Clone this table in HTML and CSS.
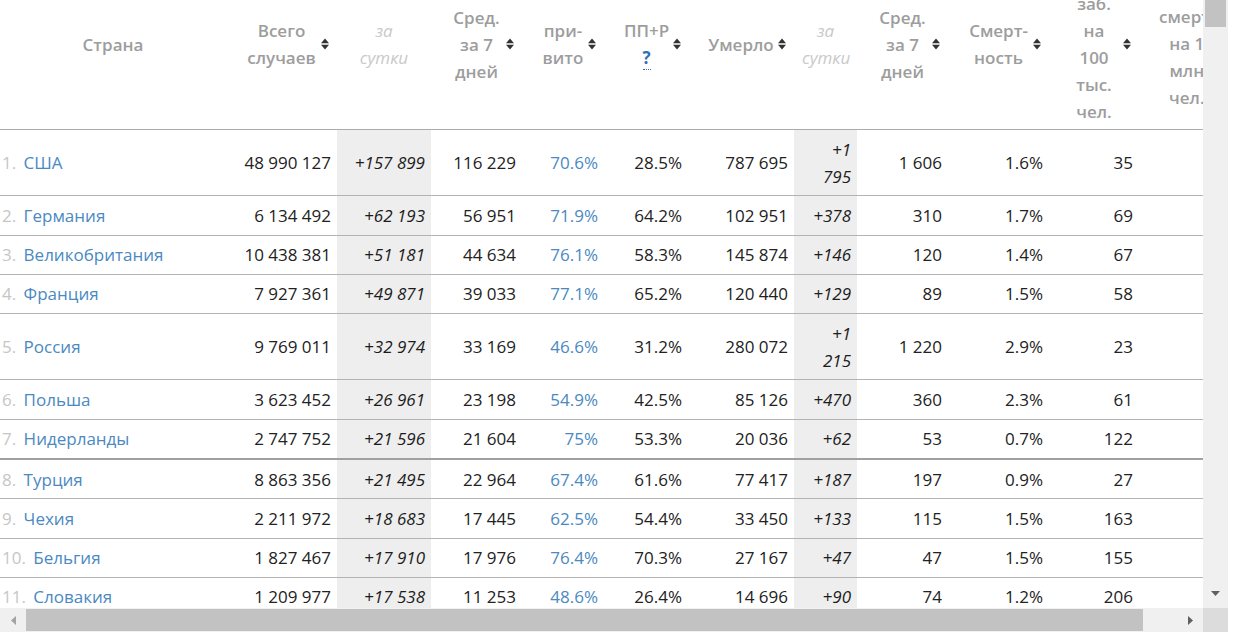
FILE: index.html
```html
<!DOCTYPE html>
<html lang="ru">
<head>
<meta charset="utf-8">
<title>Статистика</title>
<link rel="stylesheet" href="styles.css">
</head>
<body>
<div class="frame">
  <div class="viewport">
    <table class="stats">
      <colgroup>
        <col class="w-country"><col class="w-total"><col class="w-day"><col class="w-avg"><col class="w-vac"><col class="w-ppr"><col class="w-dead"><col class="w-dday"><col class="w-avg"><col class="w-mort"><col class="w-per"><col class="w-last">
      </colgroup>
      <thead>
        <tr>
          <th class="plain">Страна</th>
          <th><div class="h"><span class="lbl">Всего<br>случаев</span><svg class="sort" viewBox="0 0 8 12"><path d="M0 5.2 4 0.6 8 5.2Z M0 6.8 4 11.4 8 6.8Z"/></svg></div></th>
          <th class="plain day">за<br>сутки</th>
          <th><div class="h"><span class="lbl">Сред.<br>за 7<br>дней</span><svg class="sort" viewBox="0 0 8 12"><path d="M0 5.2 4 0.6 8 5.2Z M0 6.8 4 11.4 8 6.8Z"/></svg></div></th>
          <th><div class="h"><span class="lbl">при-<br>вито</span><svg class="sort" viewBox="0 0 8 12"><path d="M0 5.2 4 0.6 8 5.2Z M0 6.8 4 11.4 8 6.8Z"/></svg></div></th>
          <th><div class="h"><span class="lbl">ПП+Р<br><a class="hint">?</a></span><svg class="sort" viewBox="0 0 8 12"><path d="M0 5.2 4 0.6 8 5.2Z M0 6.8 4 11.4 8 6.8Z"/></svg></div></th>
          <th><div class="h"><span class="lbl">Умерло</span><svg class="sort" viewBox="0 0 8 12"><path d="M0 5.2 4 0.6 8 5.2Z M0 6.8 4 11.4 8 6.8Z"/></svg></div></th>
          <th class="plain day">за<br>сутки</th>
          <th><div class="h"><span class="lbl">Сред.<br>за 7<br>дней</span><svg class="sort" viewBox="0 0 8 12"><path d="M0 5.2 4 0.6 8 5.2Z M0 6.8 4 11.4 8 6.8Z"/></svg></div></th>
          <th><div class="h"><span class="lbl">Смерт-<br>ность</span><svg class="sort" viewBox="0 0 8 12"><path d="M0 5.2 4 0.6 8 5.2Z M0 6.8 4 11.4 8 6.8Z"/></svg></div></th>
          <th><div class="h"><span class="lbl tall">заб.<br>на<br>100<br>тыс.<br>чел.</span><svg class="sort" viewBox="0 0 8 12"><path d="M0 5.2 4 0.6 8 5.2Z M0 6.8 4 11.4 8 6.8Z"/></svg></div></th>
          <th><div class="h"><span class="lbl tall">смерт.<br>на 1<br>млн<br>чел.</span><svg class="sort" viewBox="0 0 8 12"><path d="M0 5.2 4 0.6 8 5.2Z M0 6.8 4 11.4 8 6.8Z"/></svg></div></th>
        </tr>
      </thead>
      <tbody>
        <tr><td class="country"><span class="rank">1.</span> <a>США</a></td><td>48 990 127</td><td class="day">+157 899</td><td>116 229</td><td class="pct">70.6%</td><td>28.5%</td><td>787 695</td><td class="day dday">+1 795</td><td>1 606</td><td>1.6%</td><td>35</td><td></td></tr>
        <tr><td class="country"><span class="rank">2.</span> <a>Германия</a></td><td>6 134 492</td><td class="day">+62 193</td><td>56 951</td><td class="pct">71.9%</td><td>64.2%</td><td>102 951</td><td class="day dday">+378</td><td>310</td><td>1.7%</td><td>69</td><td></td></tr>
        <tr><td class="country"><span class="rank">3.</span> <a>Великобритания</a></td><td>10 438 381</td><td class="day">+51 181</td><td>44 634</td><td class="pct">76.1%</td><td>58.3%</td><td>145 874</td><td class="day dday">+146</td><td>120</td><td>1.4%</td><td>67</td><td></td></tr>
        <tr><td class="country"><span class="rank">4.</span> <a>Франция</a></td><td>7 927 361</td><td class="day">+49 871</td><td>39 033</td><td class="pct">77.1%</td><td>65.2%</td><td>120 440</td><td class="day dday">+129</td><td>89</td><td>1.5%</td><td>58</td><td></td></tr>
        <tr><td class="country"><span class="rank">5.</span> <a>Россия</a></td><td>9 769 011</td><td class="day">+32 974</td><td>33 169</td><td class="pct">46.6%</td><td>31.2%</td><td>280 072</td><td class="day dday">+1 215</td><td>1 220</td><td>2.9%</td><td>23</td><td></td></tr>
        <tr><td class="country"><span class="rank">6.</span> <a>Польша</a></td><td>3 623 452</td><td class="day">+26 961</td><td>23 198</td><td class="pct">54.9%</td><td>42.5%</td><td>85 126</td><td class="day dday">+470</td><td>360</td><td>2.3%</td><td>61</td><td></td></tr>
        <tr class="sep"><td class="country"><span class="rank">7.</span> <a>Нидерланды</a></td><td>2 747 752</td><td class="day">+21 596</td><td>21 604</td><td class="pct">75%</td><td>53.3%</td><td>20 036</td><td class="day dday">+62</td><td>53</td><td>0.7%</td><td>122</td><td></td></tr>
        <tr><td class="country"><span class="rank">8.</span> <a>Турция</a></td><td>8 863 356</td><td class="day">+21 495</td><td>22 964</td><td class="pct">67.4%</td><td>61.6%</td><td>77 417</td><td class="day dday">+187</td><td>197</td><td>0.9%</td><td>27</td><td></td></tr>
        <tr><td class="country"><span class="rank">9.</span> <a>Чехия</a></td><td>2 211 972</td><td class="day">+18 683</td><td>17 445</td><td class="pct">62.5%</td><td>54.4%</td><td>33 450</td><td class="day dday">+133</td><td>115</td><td>1.5%</td><td>163</td><td></td></tr>
        <tr><td class="country"><span class="rank">10.</span> <a>Бельгия</a></td><td>1 827 467</td><td class="day">+17 910</td><td>17 976</td><td class="pct">76.4%</td><td>70.3%</td><td>27 167</td><td class="day dday">+47</td><td>47</td><td>1.5%</td><td>155</td><td></td></tr>
        <tr><td class="country"><span class="rank">11.</span> <a>Словакия</a></td><td>1 209 977</td><td class="day">+17 538</td><td>11 253</td><td class="pct">48.6%</td><td>26.4%</td><td>14 696</td><td class="day dday">+90</td><td>74</td><td>1.2%</td><td>206</td><td></td></tr>
      </tbody>
    </table>
  </div>
  <div class="vbar">
    <div class="vthumb"></div>
    <div class="fill"></div>
    <div class="vdown"><svg class="arrow-v" viewBox="0 0 9 5"><path d="M0 0H9L4.5 5Z"/></svg></div>
  </div>
  <div class="hbar">
    <div class="hleft"><svg class="arrow-h off" viewBox="0 0 5 9"><path d="M5 0V9L0 4.5Z"/></svg></div>
    <div class="hthumb"></div>
    <div class="fill"></div>
    <div class="hright"><svg class="arrow-h" viewBox="0 0 5 9"><path d="M0 0V9L5 4.5Z"/></svg></div>
  </div>
  <div class="corner"></div>
</div>
</body>
</html>
```

FILE: styles.css
```css
* { box-sizing: border-box; }

body {
  margin: 0;
  background: #fff;
  font-family: "Open Sans", "Noto Sans", sans-serif;
  color: #222;
}

.frame {
  display: grid;
  grid-template-columns: 1203px 25px;
  grid-template-rows: 608px 24px;
  width: 1228px;
}

.viewport {
  overflow: hidden;
}

.stats {
  border-collapse: collapse;
  table-layout: fixed;
  width: 1233px;
  margin-top: -41px;
  font-size: 17px;
}

.w-country { width: 226px; }
.w-total { width: 111px; }
.w-day { width: 94px; }
.w-avg { width: 91px; }
.w-vac { width: 82px; }
.w-ppr { width: 84px; }
.w-dead { width: 106px; }
.w-dday { width: 63px; }
.w-mort { width: 101px; }
.w-per { width: 90px; }
.w-last { width: 94px; }

.stats th {
  font-weight: 600;
  color: #9d9d9d;
  line-height: 27px;
  padding: 4.5px 8px;
  vertical-align: middle;
  text-align: center;
  border-bottom: 1px solid #ababab;
  white-space: nowrap;
}

.stats th.day {
  font-style: italic;
  font-weight: 400;
  color: #c9c9c9;
}

.h {
  display: flex;
  align-items: center;
  padding-left: 12px;
}

.lbl {
  flex: 1;
  text-align: center;
}

.lbl.tall {
  padding-top: 26px;
}

.sort {
  flex: none;
  width: 8px;
  height: 12px;
  margin-left: 4px;
  fill: #333;
}

.hint {
  color: #2f6fb5;
  font-weight: 700;
  text-decoration: none;
  border-bottom: 1px dotted #2f6fb5;
}

.stats td {
  line-height: 27px;
  padding: 5.65px 6px;
  text-align: right;
  vertical-align: middle;
  border-bottom: 1px solid #b3b3b3;
}

.stats tr.sep td {
  border-bottom: 2px solid #a0a0a0;
}

.stats td.country {
  text-align: left;
  padding-left: 2px;
}

.country a {
  color: #4a89c2;
}

.rank {
  color: #c6c6c6;
  margin-right: 3px;
}

.stats td.day {
  background: #eeeeee;
  font-style: italic;
  color: #1c1c1c;
}

.stats td.dday {
  padding-left: 14px;
}

.stats td.pct {
  color: #4a89c2;
}

.vbar {
  background: #f0f0f0;
  display: flex;
  flex-direction: column;
}

.vthumb {
  height: 27px;
  margin: 0 2px 0 2px;
  background: #c2c2c2;
}

.fill {
  flex: 1;
}

.vdown {
  height: 30px;
  display: flex;
  align-items: center;
  justify-content: center;
}

.arrow-v {
  width: 9px;
  height: 5px;
  fill: #606060;
}

.hbar {
  background: #f0f0f0;
  display: flex;
}

.hleft,
.hright {
  width: 26px;
  display: flex;
  align-items: center;
  justify-content: center;
}

.hthumb {
  width: 1117px;
  margin: 1px 0;
  background: #c2c2c2;
}

.arrow-h {
  width: 5px;
  height: 9px;
  fill: #606060;
}

.arrow-h.off {
  fill: #a3a3a3;
}

.corner {
  background: #dcdcdc;
}
```
